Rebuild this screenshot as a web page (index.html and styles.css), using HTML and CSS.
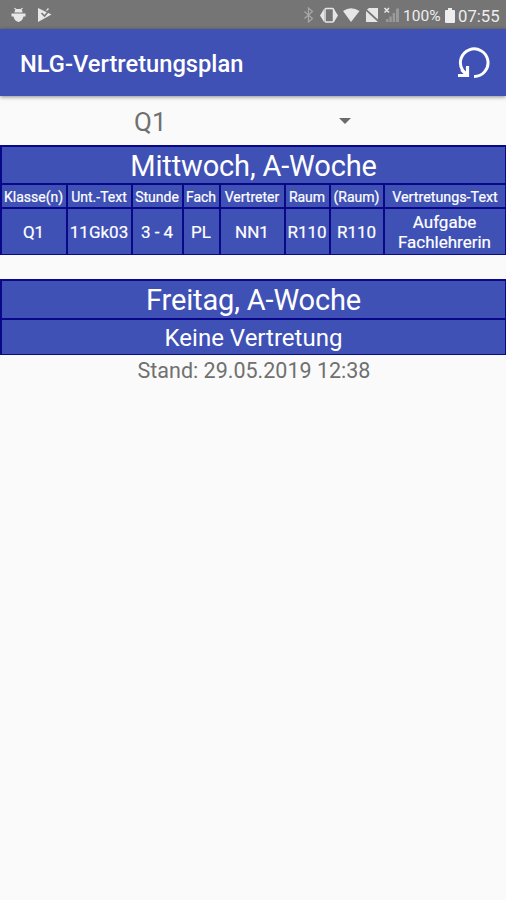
FILE: index.html
```html
<!DOCTYPE html>
<html lang="de">
<head>
<meta charset="utf-8">
<title>NLG-Vertretungsplan</title>
<link rel="stylesheet" href="styles.css">
</head>
<body>
<div class="status">
  <svg class="notifications" width="60" height="29" viewBox="0 0 60 29" fill="#e8e8e8">
    <path d="M14.500 12.500q0-2 1-2.700L14 8.300l.8-.6 1.700 1.200h4l1.700-1.200.8.600-1.500 1.500q1 .7 1 2.700z"/>
    <path d="M11.500 13.500h14v3H23.500Q22.500 21 18.500 22 14.500 21 13.500 16.500H11.500z"/>
    <path d="M38 8l13.500 6.500L38 22z"/>
    <path d="M41.500 13l3 3 6-7" fill="none" stroke="#777" stroke-width="1.600"/>
    <path d="M46.500 10.500l2-2" fill="none" stroke="#ddd" stroke-width="1.500"/>
  </svg>
  <svg class="indicators" width="112" height="29" viewBox="290 0 112 29" fill="#e6e6e6">
    <path d="M304.500 11.500l8 7-4 3.500V8l4 3.500-8 7" fill="none" stroke="#a8a8a8" stroke-width="1.200"/>
    <path d="M324 9v13l-4-6.500zM334 9v13l4-6.500z"/>
    <rect x="325" y="8.500" width="8.500" height="13.500" rx="1" fill="none" stroke="#e6e6e6" stroke-width="1.500"/>
    <path d="M343 11q8-5.500 16.500 0L351 22z"/>
    <path d="M369 8h9v11.500L367 9.500zM366 11l12 11H366z"/>
    <path d="M384.500 8l4.500 4.500M389 8l-4.500 4.500" stroke="#e6e6e6" stroke-width="1.600"/>
    <path d="M386 19h2.500v3H386zM389.300 16.500h2.500V22h-2.500zM392.600 13h2.500v9h-2.500zM396 8.500h3V22h-3z" fill="#999"/>
  </svg>
  <span class="percent">100%</span>
  <svg class="battery" width="10" height="15" viewBox="0 0 10 15" fill="#eee"><path d="M3 0h4v2h2q1 0 1 1v11q0 1-1 1H1q-1 0-1-1V3q0-1 1-1h2z"/></svg>
  <span class="clock">07:55</span>
</div>
<header class="appbar">
  <h1>NLG-Vertretungsplan</h1>
  <svg class="reload" width="36" height="36" viewBox="456 46 36 36" fill="none" stroke="#fff">
    <path d="M474 76.500A13.800 13.800 0 1 0 462.500 70" stroke-width="3"/>
    <path d="M458 75.500H467.500V66M467 75l-5.500-5.500" stroke-width="3.200"/>
  </svg>
</header>
<div class="picker">
  <span>Q1</span>
  <svg width="12" height="6" viewBox="0 0 12 6"><path d="M0 0h12L6 6z" fill="#6b6b6b"/></svg>
</div>
<section class="plan wednesday">
  <div class="day">Mittwoch, A-Woche</div>
  <div class="head">Klasse(n)</div><div class="head">Unt.-Text</div><div class="head">Stunde</div><div class="head">Fach</div><div class="head">Vertreter</div><div class="head">Raum</div><div class="head">(Raum)</div><div class="head wide">Vertretungs-Text</div>
  <div>Q1</div><div>11Gk03</div><div>3 - 4</div><div>PL</div><div>NN1</div><div>R110</div><div>R110</div><div>Aufgabe<br>Fachlehrerin</div>
</section>
<section class="plan friday">
  <div class="day">Freitag, A-Woche</div>
  <div class="none">Keine Vertretung</div>
</section>
<p class="updated">Stand: 29.05.2019 12:38</p>
</body>
</html>
```
FILE: styles.css
```css
* { box-sizing: border-box; }
body {
  margin: 0;
  height: 900px;
  overflow: hidden;
  background: #fafafa;
  font-family: Roboto, sans-serif;
  color: #707070;
}
svg { display: block; flex: none; }
.status {
  height: 29px;
  display: flex;
  align-items: center;
  background: #757575;
  color: #eee;
  white-space: nowrap;
}
.indicators { margin-left: 230px; }
.percent { width: 43px; padding: 3px 0 0 1px; font-size: 15.5px; }
.battery { margin-top: 1px; }
.clock { padding: 3px 0 0 3px; font-size: 16.7px; }
.appbar {
  height: 67px;
  padding: 0 14px 0 20px;
  display: flex;
  align-items: center;
  justify-content: space-between;
  background: #3f51b5;
  box-shadow: 0 1px 4px rgba(0, 0, 0, .45);
  color: #fff;
}
h1 { margin: 2px 0 0; font-size: 23.7px; font-weight: 500; }
.reload { margin-top: 3px; }
.picker {
  height: 49px;
  display: flex;
  align-items: center;
  justify-content: space-between;
  padding: 2px 155px 0 134px;
  font-size: 26px;
}
.picker svg { margin-top: -2px; }
.plan {
  display: grid;
  gap: 2px;
  padding: 2px 1px 1px 2px;
  background: #080889;
  color: #fff;
}
.plan > div {
  display: flex;
  align-items: center;
  justify-content: center;
  background: #3f51b5;
  text-align: center;
  white-space: nowrap;
  font-size: 17px;
  line-height: 20px;
}
.plan > .day { grid-column: 1 / -1; font-size: 29px; letter-spacing: -.15px; padding-top: 2px; }
.plan > .head { font-size: 14px; padding: 1px 1px 0 0; }
.plan > .wide { font-size: 14.3px; padding-right: 0; }
.plan > .none { font-size: 24px; padding-top: 2px; }
.wednesday > div:nth-last-child(-n+8) { padding: 1px 1px 0 0; -webkit-text-stroke: .2px #fff; }
.plan > .head { -webkit-text-stroke: .2px #fff; }
.wednesday {
  height: 110px;
  grid-template-columns: 64px 63px 49px 35px 63px 43px 52px 1fr;
  grid-template-rows: 36px 22px 1fr;
}
.friday {
  height: 76px;
  margin-top: 24px;
  grid-template-rows: 37px 1fr;
}
.friday > .day { padding-top: 1px; }
.updated {
  margin: 2px 0 0 2px;
  text-align: center;
  font-size: 21.5px;
  line-height: 28px;
}
```
